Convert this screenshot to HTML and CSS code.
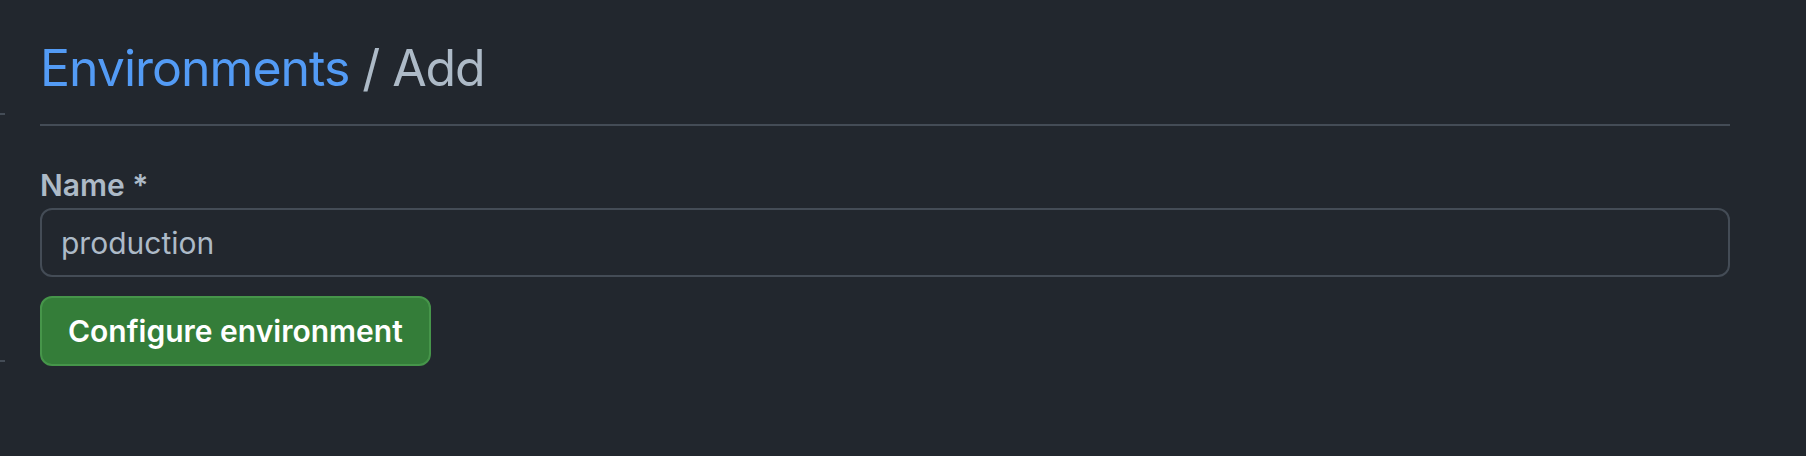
FILE: index.html
```html
<!DOCTYPE html>
<html lang="en">
<head>
<meta charset="utf-8">
<title>Environments / Add</title>
<link rel="stylesheet" href="styles.css">
</head>
<body>
<div class="layout">
  <div class="rail">
    <span class="rail-mark rail-mark-top"></span>
    <span class="rail-mark rail-mark-bottom"></span>
  </div>
  <main class="content">
    <div class="subhead">
      <h2 class="subhead-heading"><a class="crumb-link" href="#">Environments</a> / Add</h2>
    </div>
    <form class="env-form">
      <label class="form-label" for="env-name">Name *</label>
      <input class="form-input" id="env-name" type="text" value="production">
      <button class="btn-primary" type="button">Configure environment</button>
    </form>
  </main>
</div>
</body>
</html>
```

FILE: styles.css
```css
html, body {
  margin: 0;
  padding: 0;
  background: #22272e;
}
body {
  font-family: Inter, "Noto Sans", "Liberation Sans", sans-serif;
  color: #adbac7;
  width: 1806px;
  height: 456px;
  overflow: hidden;
}
.layout {
  display: flex;
}
.rail {
  width: 5px;
  display: flex;
  flex-direction: column;
}
.rail-mark {
  display: block;
  width: 5px;
  height: 2px;
  background: #444c56;
}
.rail-mark-top {
  margin-top: 113px;
}
.rail-mark-bottom {
  margin-top: 245px;
}
.content {
  margin-left: 35px;
  width: 1690px;
}
.subhead {
  padding-top: 36px;
  padding-bottom: 23px;
  border-bottom: 2px solid #444c56;
}
.subhead-heading {
  margin: 0;
  font-size: 50px;
  line-height: 65px;
  letter-spacing: -1.1px;
  font-weight: 400;
  color: #adbac7;
}
.crumb-link {
  color: #539bf5;
  letter-spacing: -1px;
  text-decoration: none;
}
.env-form {
  display: flex;
  flex-direction: column;
  align-items: flex-start;
  padding-top: 37px;
}
.form-label {
  font-size: 30px;
  line-height: 45px;
  font-weight: 600;
  color: #adbac7;
}
.form-input {
  box-sizing: border-box;
  width: 100%;
  height: 69px;
  margin: 0;
  padding: 0 19px;
  border: 2px solid #444c56;
  border-radius: 12px;
  background: #22272e;
  color: #adbac7;
  font-family: inherit;
  font-size: 30px;
  outline: none;
}
.btn-primary {
  box-sizing: border-box;
  margin-top: 19px;
  height: 70px;
  padding: 0 26px;
  border: 2px solid #46954a;
  border-radius: 12px;
  background: #347d39;
  color: #ffffff;
  font-family: inherit;
  font-size: 30px;
  font-weight: 600;
}
```
